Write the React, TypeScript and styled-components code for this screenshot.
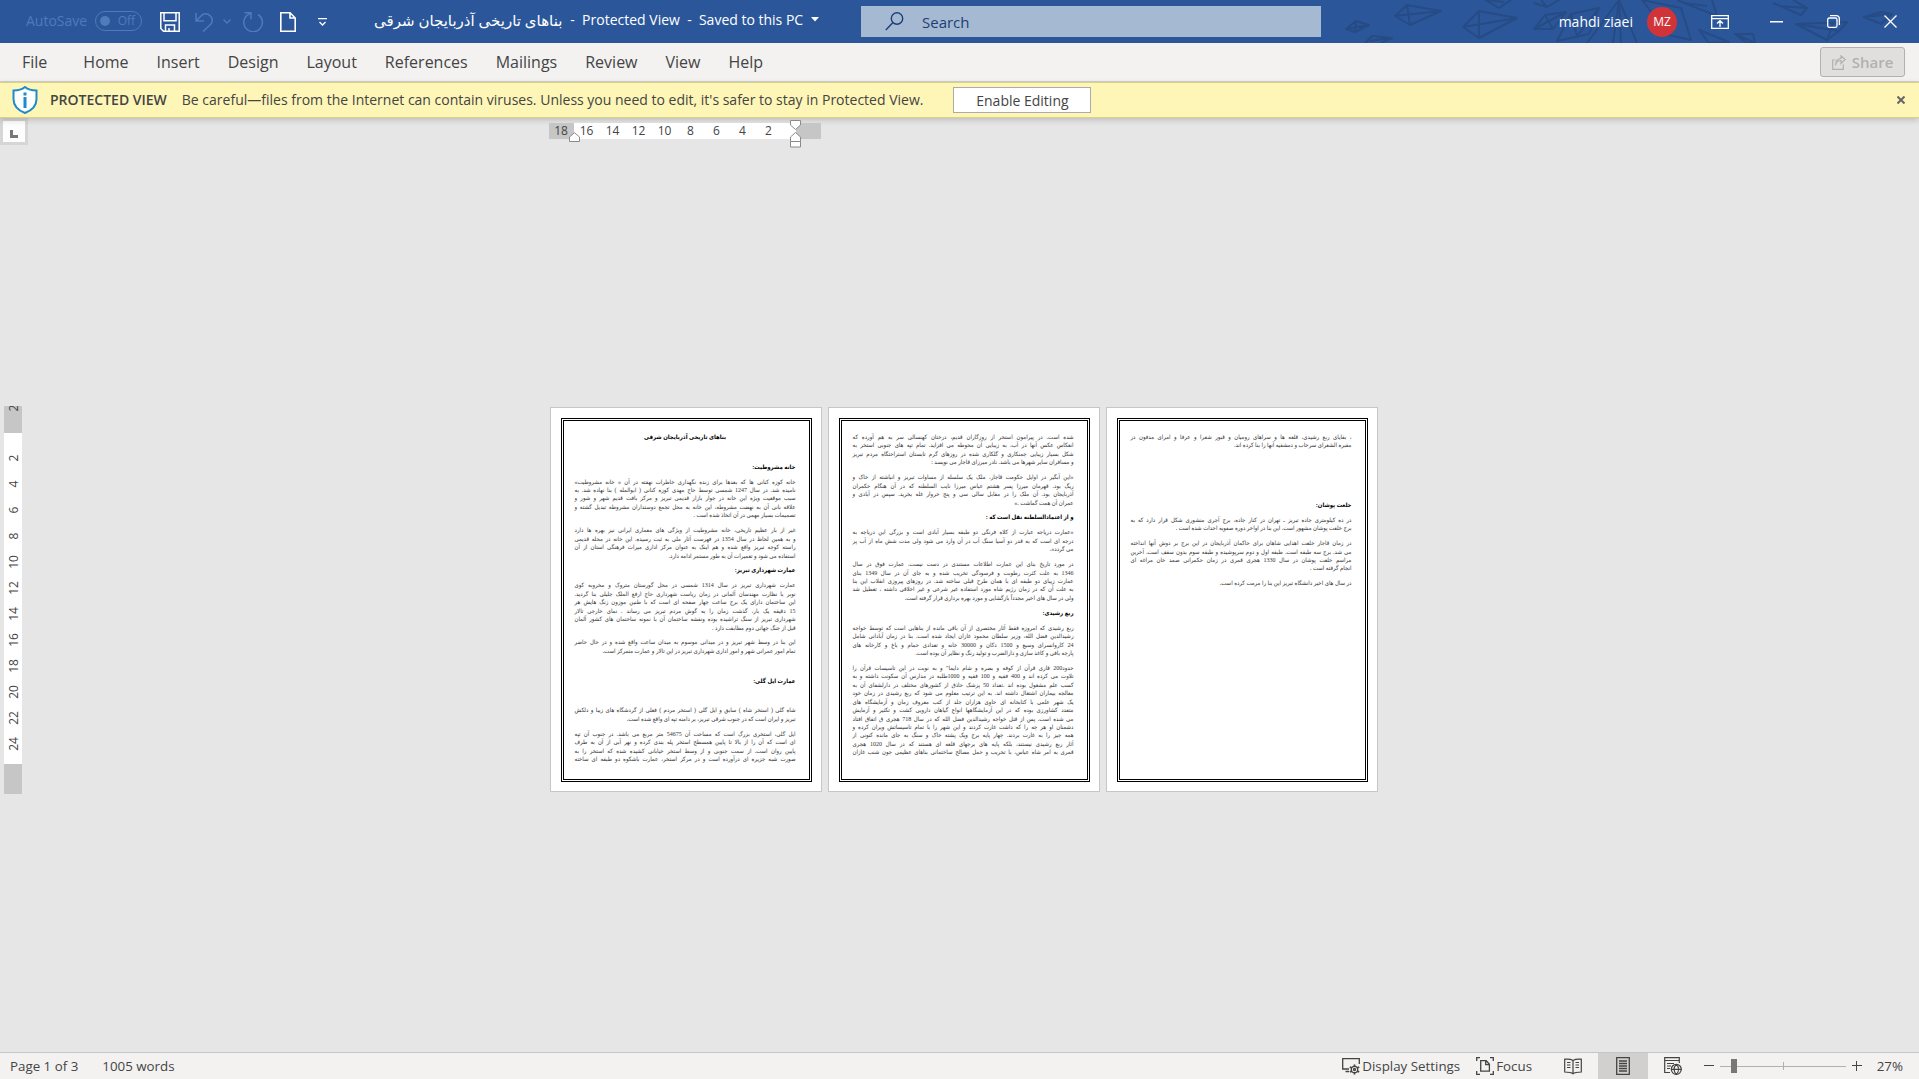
import React, { useState } from 'react';
import styled, { createGlobalStyle, css } from 'styled-components';

const UI_FONT = `'Open Sans', 'Noto Sans', 'DejaVu Sans', sans-serif`;
const DOC_FONT = `'Liberation Serif', 'DejaVu Sans Condensed', 'DejaVu Sans', serif`;

const GlobalStyle = createGlobalStyle`
  *, *::before, *::after { box-sizing: border-box; }
  html, body, #root { height: 100%; margin: 0; }
  body { font-family: ${UI_FONT}; color: #444; background: #e6e6e6; overflow: hidden; }
  button, input { font-family: inherit; color: inherit; }
  button { border: 0; background: transparent; padding: 0; }
`;

const Window = styled.div`
  display: flex;
  flex-direction: column;
  height: 100vh;
`;

/* ---------- title bar ---------- */

const TitleBar = styled.header`
  position: relative;
  display: grid;
  grid-template-columns: 861fr 460fr 598fr;
  align-items: center;
  height: 43px;
  flex: none;
  background: #2b579a;
  color: #fff;
`;

const Pattern = styled.svg`
  position: absolute;
  top: 0;
  right: 0;
  width: 600px;
  height: 43px;
  fill: none;
  stroke: #264b85;
  stroke-width: 2;
  stroke-linejoin: round;
`;

const TitleLeft = styled.div`
  display: flex;
  align-items: center;
  padding-left: 26px;
`;

const AutoSave = styled.label`
  display: flex;
  align-items: center;
  gap: 8px;
  width: 134px;
  padding-bottom: 2px;
  font-size: 14px;
  line-height: 20px;
  color: #4e7bba;
  white-space: nowrap;
`;

const Toggle = styled.span`
  display: flex;
  align-items: center;
  justify-content: space-between;
  width: 47px;
  height: 20px;
  padding: 0 6px 0 4px;
  border: 1px solid #4e7bba;
  border-radius: 10px;
  font-size: 12px;
`;

const ToggleInput = styled.input`
  appearance: none;
  width: 10px;
  height: 10px;
  margin: 0;
  border-radius: 50%;
  background: #4e7bba;
`;

const QuickButton = styled.button<{ $width: number; $dim?: boolean }>`
  display: flex;
  align-items: center;
  width: ${(p) => p.$width}px;
  height: 32px;
  color: ${(p) => (p.$dim ? '#4e7bba' : '#fff')};
`;

const DocTitle = styled.div`
  display: flex;
  align-items: center;
  gap: 8px;
  margin-left: 47px;
  padding-bottom: 4px;
  font-size: 14px;
  line-height: 20px;
  white-space: pre;
`;

const FileName = styled.span`
  font-size: 15px;
`;

const SearchBox = styled.label`
  position: relative;
  display: flex;
  align-items: center;
  gap: 18px;
  height: 31px;
  padding-left: 24px;
  background: #a6b9d2;
  color: #1c3f76;
`;

const SearchInput = styled.input`
  flex: 1;
  min-width: 0;
  border: 0;
  padding: 0;
  background: transparent;
  font-size: 15px;
  outline: none;
  &::placeholder { color: #1c3f76; opacity: 1; }
`;

const TitleRight = styled.div`
  position: relative;
  display: flex;
  align-items: center;
  justify-content: flex-end;
`;

const Account = styled.button`
  display: flex;
  align-items: center;
  gap: 14px;
  margin-right: 14px;
  font-size: 14px;
`;

const Avatar = styled.span`
  display: grid;
  place-items: center;
  width: 30px;
  height: 30px;
  border-radius: 50%;
  background: #d13438;
  font-size: 12px;
`;

const CaptionButton = styled.button`
  display: grid;
  place-items: center;
  width: 57px;
  height: 43px;
`;

/* ---------- ribbon ---------- */

const Ribbon = styled.nav`
  display: flex;
  align-items: center;
  flex: none;
  height: 39px;
  padding: 0 14px 0 8px;
  background: #f3f2f1;
  border-bottom: 1px solid #d2d0ce;
`;

const Tab = styled.button<{ $first?: boolean }>`
  height: 38px;
  padding: 0 14px;
  margin-right: ${(p) => (p.$first ? 8 : 0)}px;
  font-size: 16px;
  line-height: 22px;
`;

const ShareButton = styled.button`
  display: flex;
  align-items: center;
  justify-content: center;
  gap: 6px;
  width: 85px;
  height: 30px;
  margin-left: auto;
  border: 1px solid #b3b0ad;
  border-radius: 3px;
  background: #e1dfdd;
  color: #b3b0ad;
  font-size: 15px;
  font-weight: 600;
`;

/* ---------- protected view bar ---------- */

const MessageBar = styled.section`
  position: relative;
  display: flex;
  align-items: center;
  flex: none;
  height: 36px;
  padding: 0 11px 0 12px;
  background: #fdf6b7;
  border-top: 1px solid #d8d384;
  border-bottom: 1px solid #d8d384;
  box-shadow: 0 2px 6px rgba(0, 0, 0, 0.18);
  font-size: 14px;
  line-height: 20px;
  white-space: nowrap;
`;

const MessageTitle = styled.strong`
  margin: 0 15px 0 12px;
  font-weight: 600;
`;

const EnableButton = styled.button`
  width: 138px;
  height: 26px;
  margin-left: 30px;
  border: 1px solid #ababab;
  background: #fff;
  font-size: 14px;
`;

const DismissButton = styled.button`
  display: grid;
  place-items: center;
  width: 14px;
  height: 20px;
  margin-left: auto;
`;

/* ---------- workspace ---------- */

const Workspace = styled.main`
  display: grid;
  grid-template-columns: 28px minmax(0, 1fr) 20px;
  grid-template-rows: 29px minmax(0, 1fr);
  justify-items: center;
  flex: 1;
  min-height: 0;
  background: #e6e6e6;
`;

const TabStop = styled.button`
  display: grid;
  place-items: center;
  align-self: start;
  width: 28px;
  height: 27px;
  padding-top: 4px;
  border: 3px solid #d6d6d6;
  background: #fdfdfd;
`;

const HRuler = styled.div`
  position: relative;
  display: flex;
  align-self: start;
  width: 830px;
  height: 16px;
  margin-top: 5px;
  font-size: 12px;
  line-height: 16px;
`;

const HMargin = styled.div`
  width: 25px;
  background: #c6c6c6;
  text-align: center;
`;

const HScale = styled.div`
  display: grid;
  grid-template-columns: repeat(8, 26px);
  width: 222px;
  background: #fff;
  text-align: center;
`;

const Marker = styled.svg<{ $left: number; $top: number }>`
  position: absolute;
  left: ${(p) => p.$left}px;
  top: ${(p) => p.$top}px;
  fill: #fff;
  stroke: #8a8a8a;
`;

const VRuler = styled.div`
  align-self: center;
  width: 18px;
  margin-right: 2px;
  font-size: 12px;
`;

const VMargin = styled.div<{ $height: number }>`
  height: ${(p) => p.$height}px;
  background: #c6c6c6;
  overflow: hidden;
`;

const VScale = styled.div`
  height: 331px;
  padding-top: 12px;
  background: #fff;
`;

const VNumber = styled.div`
  display: flex;
  align-items: center;
  justify-content: center;
  height: 26px;
  padding-left: 2px;
  line-height: 18px;
  span { transform: rotate(-90deg); }
`;

const VTop = styled(VNumber)`
  height: 4px;
`;

const Pages = styled.div`
  grid-column: 2;
  display: flex;
  align-self: center;
  gap: 6px;
`;

const Page = styled.article`
  width: 272px;
  height: 385px;
  padding: 10px;
  border: 1px solid #c6c6c6;
  background: #fff;
`;

const PageFrame = styled.div`
  display: flex;
  flex-direction: column;
  gap: 1.07em;
  width: 251px;
  height: 364px;
  padding: 12px 13px 0 11px;
  border: 3px double #000;
  direction: rtl;
  font-family: ${DOC_FONT};
  font-size: 6px;
  line-height: 1.41;
  color: #333;
`;

const Para = styled.p<{ $bold?: boolean; $center?: boolean }>`
  margin: 0;
  min-height: 1.41em;
  ${(p) => p.$bold && css`font-weight: 700; color: #000;`}
  ${(p) => p.$center && css`text-align: center;`}
`;

const Line = styled.span<{ $justify: boolean }>`
  display: block;
  white-space: nowrap;
  ${(p) => p.$justify && css`text-align: justify; text-align-last: justify;`}
`;

/* ---------- status bar ---------- */

const StatusBar = styled.footer`
  display: flex;
  align-items: center;
  flex: none;
  height: 27px;
  padding: 0 16px 0 10px;
  border-top: 1px solid #c8c6c4;
  background: #f3f2f1;
  font-size: 12px;
  line-height: 18px;
  white-space: nowrap;
`;

const StatusText = styled.button`
  margin-right: 24px;
`;

const StatusTools = styled.div`
  display: flex;
  align-items: center;
  margin-left: auto;
`;

const ToolButton = styled.button`
  display: flex;
  align-items: center;
  gap: 2px;
  margin-right: 16px;
`;

const ViewButton = styled.button<{ $active?: boolean }>`
  display: grid;
  place-items: center;
  width: 50px;
  height: 26px;
  background: ${(p) => (p.$active ? '#d2d0ce' : 'transparent')};
`;

const ZoomGroup = styled.div`
  display: flex;
  align-items: center;
  gap: 6px;
  margin-left: 6px;
`;

const ZoomButton = styled.button`
  display: grid;
  place-items: center;
  width: 10px;
  height: 20px;
`;

const ZoomRange = styled.input`
  appearance: none;
  width: 126px;
  height: 14px;
  margin: 0;
  background:
    linear-gradient(#b3b0ad, #b3b0ad) center / 1px 8px no-repeat,
    linear-gradient(#b3b0ad, #b3b0ad) center / 100% 1px no-repeat;
  &::-webkit-slider-thumb {
    appearance: none;
    width: 6px;
    height: 14px;
    background: #777;
  }
`;

const ZoomValue = styled.button`
  width: 35px;
  text-align: right;
`;

/* ---------- document text ---------- */

type Block = { lines: string[]; bold?: boolean; center?: boolean };

const blank: Block = { lines: [] };

const pages: Block[][] = [
  [
    { lines: ['بناهای تاریخی آذربایجان شرقی'], bold: true, center: true },
    blank,
    { lines: ['خانه مشروطیت:'], bold: true },
    {
      lines: [
        'خانه کوزه کنانی ها که بعدها برای زنده نگهداری خاطرات نهفته در آن « خانه مشروطیت»',
        'نامیده شد. در سال 1247 شمسی توسط حاج مهدی کوزه کنانی ( ابوالمله ) بنا نهاده شد. به',
        'سبب موقعیت ویژه این خانه در جوار بازار قدیمی تبریز و مرکز بافت قدیم شهر و شور و',
        'علاقه بانی آن به نهضت مشروطه، این خانه به محل تجمع دوستداران مشروطه تبدیل گشته و',
        'تصمیمات بسیار مهمی در آن اتخاذ شده است .',
      ],
    },
    {
      lines: [
        'غیر از بار عظیم تاریخی، خانه مشروطیت از ویژگی های معماری ایرانی نیز بهره ها دارد',
        'و به همین لحاظ در سال 1354 در فهرست آثار ملی به ثبت رسیده. این خانه در محله قدیمی',
        'راسته کوچه تبریز واقع شده و هم اینک به عنوان مرکز اداری میراث فرهنگی استان از آن',
        'استفاده می شود و تعمیرات آن به طور مستمر ادامه دارد.',
      ],
    },
    { lines: ['عمارت شهرداری تبریز:'], bold: true },
    {
      lines: [
        'عمارت شهرداری تبریز در سال 1314 شمسی در محل گورستان متروک و مخروبه کوی',
        'نوبر با نظارت مهندسان آلمانی در زمان ریاست شهرداری حاج ارفع الملک جلیلی بنا گردید.',
        'این ساختمان دارای یک برج ساعت چهار صفحه ای است که با طنین موزون زنگ هایش هر',
        '15 دقیقه یک بار، گذشت زمان را به گوش مردم تبریز می رساند . نمای خارجی تالار',
        'شهرداری تبریز از سنگ تراشیده بوده ونقشه ساختمان آن با نمونه ساختمان های کشور آلمان',
        'قبل از جنگ جهانی دوم مطابقت دارد .',
      ],
    },
    {
      lines: [
        'این بنا در وسط شهر تبریز و در میدانی موسوم به میدان ساعت واقع شده و در حال حاضر',
        'تمام امور عمرانی شهر و امور اداری شهرداری تبریز در این تالار و عمارت متمرکز است.',
      ],
    },
    blank,
    { lines: ['عمارت ایل گلی:'], bold: true },
    blank,
    {
      lines: [
        'شاه گلی ( استخر شاه ) سابق و ایل گلی ( استخر مردم ) فعلی از گردشگاه های زیبا و دلکش',
        'تبریز و ایران است که در جنوب شرقی تبریز، بر دامنه تپه ای واقع شده است.',
      ],
    },
    {
      lines: [
        'ایل گلی، استخری بزرگ است که مساحت آن 54675 متر مربع می باشد. در جنوب آن تپه',
        'ای است که آن را از بالا تا پایین همسطح استخر پله بندی کرده و نهر آبی از آن به طرف',
        'پایین روان است. از سمت جنوبی و از وسط استخر خیابانی کشیده شده که استخر را به',
        'صورت شبه جزیره ای درآورده است و در مرکز استخر، عمارت باشکوه دو طبقه ای ساخته ',
      ],
    },
  ],
  [
    {
      lines: [
        'شده است. در پیرامون استخر از روزگاران قدیم، درختان کهنسالی سر به هم آورده که',
        'انعکاس عکس آنها در آب، به زیبایی آن محوطه می افزاید. تمام تپه های جنوبی استخر به',
        'شکل بسیار زیبایی چمنکاری و گلکاری شده در روزهای گرم تابستان استراحتگاه مردم تبریز',
        'و مسافران سایر شهرها می باشد. نادر میرزای قاجار می نویسد :',
      ],
    },
    {
      lines: [
        '«این آبگیر در اوایل حکومت قاجار، ملک یک سلسله از مساوات تبریز و انباشته از خاک و',
        'ریگ بود. قهرمان میرزا پسر هشتم عباس میرزا نایب السلطنه که در آن هنگام حکمران',
        'آذربایجان بود. آن ملک را در مقابل سالی سی و پنج خروار غله بخرید. سپس در آبادی و',
        'عمران آن همت گماشت .»',
      ],
    },
    { lines: ['و از اعتمادالسلطنه نقل است که :'], bold: true },
    {
      lines: [
        '«عمارت دریاچه عبارت از کلاه فرنگی دو طبقه بسیار آبادی است و بزرگی این دریاچه به',
        'درجه ای است که به قدر دو آسیا سنگ آب در آن وارد می شود ولی مدت شش ماه از آب پر',
        'می گردد».',
      ],
    },
    {
      lines: [
        'در مورد تاریخ بنای این عمارت اطلاعات مستندی در دست نیست. عمارت فوق در سال',
        '1346 به علت کثرت رطوبت و فرسودگی تخریب شده و به جای آن در سال 1349 بنای',
        'عمارت زیبای دو طبقه ای با همان طرح قبلی ساخته شد. در روزهای پیروزی انقلاب این بنا',
        'به علت آن که در زمان رژیم شاه مورد استفاده غیر شرعی و غیر اخلاقی داشته ، تعطیل شد',
        'ولی در سال های اخیر مجدداً بازگشایی و مورد بهره برداری قرار گرفته است.',
      ],
    },
    { lines: ['ربع رشیدی:'], bold: true },
    {
      lines: [
        'ربع رشیدی که امروزه فقط آثار مختصری از آن باقی مانده از بناهایی است که توسط خواجه',
        'رشیدالدین فضل الله، وزیر سلطان محمود غازان ایجاد شده است. بنا در زمان آبادانی شامل',
        '24 کاروانسرای وسیع و 1500 دکان و 30000 خانه و تعدادی حمام و باغ و کارخانه های',
        'پارچه بافی و کاغذ سازی و دارالضرب و تولید رنگ و نظایر آن بوده است.',
      ],
    },
    {
      lines: [
        'حدود200 قاری قرآن از کوفه و بصره و شام دایما" و به نوبت در این تاسیسات قرآن را',
        'تلاوت می کرده اند و 400 فقیه و 100 فقیه و 1000طلبه در مدارس آن سکونت داشته و به',
        'کسب علم مشغول بوده اند .تعداد 50 پزشک حاذق از کشورهای مختلف در دارلشفای آن به',
        'معالجه بیماران اشتغال داشته اند. به این ترتیب معلوم می شود که ربع رشیدی در زمان خود',
        'یک شهر علمی با کتابخانه ای حاوی هزاران جلد از کتب معروف زمان و آزمایشگاه های',
        'متعدد کشاورزی بوده که در این آزمایشگاهها انواع گیاهان دارویی کشت و تکثیر و آزمایش',
        'می شده است. پس از قتل خواجه رشیدالدین فضل الله که در سال 718 هجری ق اتفاق افتاد',
        'دشمنان او هر چه را که داشت غارت کردند و این شهر را با تمام تاسیساتش ویران کرده و',
        'همه چیز را به غارت بردند. چهار پایه برج ویک پشته خاک و سنگ به جای مانده کنونی از',
        'آثار ربع رشیدی نیستند، بلکه پایه های برجهای قلعه ای هستند که در سال 1020 هجری',
        'قمری به امر شاه عباس، با تخریب و حمل مصالح ساختمانی بناهای عظیمی چون شنب غازان ',
      ],
    },
  ],
  [
    {
      lines: [
        '، بقایای ربع رشیدی، قلعه ها و سراهای رومیان و قبور شعرا و عرفا و امرای مدفون در',
        'مقبره الشعرای سرخاب و دمشقیه آنها را بنا کرده اند.',
      ],
    },
    blank,
    blank,
    blank,
    { lines: ['خلعت پوشان:'], bold: true },
    {
      lines: [
        'در ده کیلومتری جاده تبریز ـ تهران در کنار جاده، برج آجری منشوری شکل قرار دارد که به',
        'برج خلعت پوشان مشهور است. این بنا در اواخر دوره صفویه احداث شده است .',
      ],
    },
    {
      lines: [
        'در زمان قاجار خلعت اهدایی شاهان برای حاکمان آذربایجان در این برج بر دوش آنها انداخته',
        'می شد. برج سه طبقه است. طبقه اول و دوم سرپوشیده و طبقه سوم بدون سقف است. آخرین',
        'مراسم خلعت پوشان در سال 1330 هجری قمری در زمان حکمرانی صمد خان مراغه ای',
        'انجام گرفته است .',
      ],
    },
    { lines: ['در سال های اخیر دانشگاه تبریز این بنا را مرمت کرده است.'] },
  ],
];

const tabs = ['File', 'Home', 'Insert', 'Design', 'Layout', 'References', 'Mailings', 'Review', 'View', 'Help'];

const isJustified = (block: Block, index: number) =>
  index < block.lines.length - 1 || block.lines[index].endsWith(' ');

function DocumentPage({ blocks }: { blocks: Block[] }) {
  return (
    <Page lang="fa">
      <PageFrame>
        {blocks.map((block, b) => (
          <Para key={b} $bold={block.bold} $center={block.center}>
            {block.lines.map((line, i) => (
              <Line key={i} $justify={isJustified(block, i)}>{line.trim()}</Line>
            ))}
          </Para>
        ))}
      </PageFrame>
    </Page>
  );
}

function Kites() {
  return (
    <Pattern viewBox="0 0 600 43" preserveAspectRatio="none" aria-hidden="true">
      <path d="M27 29 L37 21 L50 25 L36 32Z M27 29 L50 25 M37 21 L36 32" />
      <path d="M76 16 L88 5 L122 11 L91 25Z M76 16 L122 11 M88 5 L91 25" />
      <path d="M144 27 L160 11 L198 18 L160 38Z M144 27 L198 18 M160 11 L160 38" />
      <path d="M46 43 L53 36 L73 38 L62 43 M50 41 L73 38" />
      <path d="M166 0 L180 8 L192 0 M166 0 L185 2" />
      <path d="M215 29 L226 15 L247 12 L234 29Z M215 29 L247 12 M226 15 L234 29" />
      <path d="M215 3 L228 7 L240 0 M222 0 L228 7" />
      <path d="M238 41 L252 14 L280 8 L270 34Z M252 14 L258 36 L280 8" />
      <path d="M268 43 L300 0 L294 43 M300 0 L318 43 M300 0 L302 43" />
      <path d="M323 0 L350 35 L372 40 L362 8Z M350 35 L340 8" />
      <path d="M358 0 L398 16 L393 0 M366 3 L388 6" />
      <path d="M380 30 L410 42 L390 43Z" />
      <path d="M416 34 L434 34 L436 43 L428 43Z M416 34 L436 43" />
      <path d="M454 3 L482 15 L488 8 L474 0 M460 6 L488 8" />
      <path d="M477 24 L520 31 L508 40Z M477 24 L528 22 L520 31 M508 40 L514 23" />
      <path d="M545 17 L562 12 L573 14 L562 24Z M545 17 L573 14" />
    </Pattern>
  );
}

export default function App() {
  const [zoom, setZoom] = useState(27);
  return (
    <>
      <GlobalStyle />
      <Window>
        <TitleBar>
          <Kites />
          <TitleLeft>
            <AutoSave>
              AutoSave
              <Toggle><ToggleInput type="checkbox" disabled />Off</Toggle>
            </AutoSave>
            <QuickButton $width={35} aria-label="Save">
              <svg width="20" height="20" viewBox="0 0 20 20" fill="none" stroke="currentColor" strokeWidth="1.5">
                <path d="M.8.8h18.4v18.4H3.5L.8 16.5Z M4 .8v8h12v-8 M5.5 19v-6h9v6 M9 19v-3" />
              </svg>
            </QuickButton>
            <QuickButton $width={28} $dim aria-label="Undo">
              <svg width="19" height="20" viewBox="0 0 19 20" fill="none" stroke="currentColor" strokeWidth="1.5">
                <path d="M1 1v8h8 M1.5 8.5L7 3a6.5 6.5 0 0 1 9 9L8 19.5" />
              </svg>
            </QuickButton>
            <QuickButton $width={20} $dim aria-label="Undo history">
              <svg width="8" height="5" viewBox="0 0 8 5" fill="none" stroke="currentColor" strokeWidth="1.3"><path d="M.5.5L4 4 7.500.5" /></svg>
            </QuickButton>
            <QuickButton $width={37} $dim aria-label="Redo">
              <svg width="21" height="20" viewBox="0 0 21 20" fill="none" stroke="currentColor" strokeWidth="1.5">
                <path d="M1.500.8h6.500v6.500 M7.500 1.500A9.300 9.300 0 1 0 15 2.500" />
              </svg>
            </QuickButton>
            <QuickButton $width={38} aria-label="New">
              <svg width="16" height="20" viewBox="0 0 16 20" fill="none" stroke="currentColor" strokeWidth="1.600">
                <path d="M.8.8H10L15.200 6v13.200H.8Z M10 .8V6h5.200" />
              </svg>
            </QuickButton>
            <QuickButton $width={9} aria-label="Customize Quick Access Toolbar">
              <svg width="9" height="8" viewBox="0 0 9 8" fill="none" stroke="currentColor" strokeWidth="1.300"><path d="M0 .7h9 M1.500 4L4.500 7 7.500 4" /></svg>
            </QuickButton>
            <DocTitle>
              <FileName dir="rtl" lang="fa">بناهای تاریخی آذربایجان شرقی</FileName>
              <span>-  Protected View  -  Saved to this PC</span>
              <svg width="8" height="5" viewBox="0 0 8 5" fill="currentColor"><path d="M0 0h8L4 4.500Z" /></svg>
            </DocTitle>
          </TitleLeft>
          <SearchBox>
            <svg width="19" height="19" viewBox="0 0 19 19" fill="none" stroke="currentColor" strokeWidth="1.400">
              <circle cx="12" cy="6.500" r="5.700" /><path d="M8 10.500L.8 18" />
            </svg>
            <SearchInput type="text" placeholder="Search" aria-label="Search" />
          </SearchBox>
          <TitleRight>
            <Account>mahdi ziaei<Avatar>MZ</Avatar></Account>
            <CaptionButton aria-label="Ribbon Display Options">
              <svg width="18" height="14" viewBox="0 0 18 14" fill="none" stroke="currentColor" strokeWidth="1.300">
                <path d="M.7.7h16.600v12.600H.7Z M.7 3.700h16.600 M9 12V6 M6 8.500L9 5.700l3 2.800" />
              </svg>
            </CaptionButton>
            <CaptionButton aria-label="Minimize">
              <svg width="13" height="2" viewBox="0 0 13 2"><path d="M0 0h13v1.500H0Z" fill="currentColor" /></svg>
            </CaptionButton>
            <CaptionButton aria-label="Restore Down">
              <svg width="13" height="13" viewBox="0 0 13 13" fill="none" stroke="currentColor" strokeWidth="1.300">
                <rect x=".7" y="3" width="9.300" height="9.300" rx="1.500" /><path d="M3 .7h6.500a2.800 2.800 0 0 1 2.800 2.800V10" />
              </svg>
            </CaptionButton>
            <CaptionButton aria-label="Close">
              <svg width="13" height="13" viewBox="0 0 13 13" stroke="currentColor" strokeWidth="1.300"><path d="M.5.5l12 12M12.500.5l-12 12" /></svg>
            </CaptionButton>
          </TitleRight>
        </TitleBar>

        <Ribbon>
          {tabs.map((tab, i) => <Tab key={tab} $first={i === 0}>{tab}</Tab>)}
          <ShareButton disabled>
            <svg width="14" height="15" viewBox="0 0 14 15" fill="none" stroke="currentColor" strokeWidth="1.200">
              <path d="M3.500 5H.7v9.300h10.600V9.500 M3.500 10.500C4 7 6 5.500 9 5.500V8.500L13.200 4.500 9 .8V3.500C5 3.700 3.500 6.500 3.500 10.500Z" />
            </svg>
            Share
          </ShareButton>
        </Ribbon>

        <MessageBar>
          <svg width="26" height="28" viewBox="0 0 26 28">
            <path d="M13 1C10 3.500 5 4.500 1.500 4.500V13c0 7 5 11.500 11.500 14 6.500-2.500 11.500-7 11.500-14V4.500C21 4.500 16 3.500 13 1Z" fill="#fff" stroke="#1e8bcd" strokeWidth="2" />
            <path d="M11.500 6.500h3v3h-3Z M11.500 11h3v11h-3Z" fill="#1e8bcd" />
          </svg>
          <MessageTitle>PROTECTED VIEW</MessageTitle>
          <span>Be careful—files from the Internet can contain viruses. Unless you need to edit, it's safer to stay in Protected View.</span>
          <EnableButton>Enable Editing</EnableButton>
          <DismissButton aria-label="Close this message">
            <svg width="8" height="8" viewBox="0 0 8 8" stroke="#666" strokeWidth="2"><path d="M.5.5l7 7M7.500.5l-7 7" /></svg>
          </DismissButton>
        </MessageBar>

        <Workspace>
          <TabStop aria-label="Tab selector">
            <svg width="8" height="8" viewBox="0 0 8 8"><path d="M0 0h3v5h5v3H0Z" fill="#777" /></svg>
          </TabStop>
          <HRuler>
            <HMargin>18</HMargin>
            <HScale>
              {[16, 14, 12, 10, 8, 6, 4, 2].map((n) => <span key={n}>{n}</span>)}
            </HScale>
            <HMargin />
            <Marker $left={20} $top={9} width="11" height="10" viewBox="0 0 11 10"><path d="M.5 9.500V5L5.500.7 10.500 5v4.500Z" /></Marker>
            <Marker $left={241} $top={-3} width="11" height="28" viewBox="0 0 11 28">
              <path d="M.5.5h10V5l-5 4.500L.5 5Z M.5 21.500V17l5-4.500 5 4.500v4.500Z M.5 21.500h10v5.500H.5Z" />
            </Marker>
          </HRuler>
          <span />
          <VRuler>
            <VMargin $height={27}><VTop><span>2</span></VTop></VMargin>
            <VScale>
              {[2, 4, 6, 8, 10, 12, 14, 16, 18, 20, 22, 24].map((n) => <VNumber key={n}><span>{n}</span></VNumber>)}
            </VScale>
            <VMargin $height={30} />
          </VRuler>
          <Pages>
            {pages.map((blocks, i) => <DocumentPage key={i} blocks={blocks} />)}
          </Pages>
        </Workspace>

        <StatusBar>
          <StatusText>Page 1 of 3</StatusText>
          <StatusText>1005 words</StatusText>
          <StatusTools>
            <ToolButton>
              <svg width="18" height="18" viewBox="0 0 18 18" fill="none" stroke="#444" strokeWidth="1.300">
                <path d="M7 12H.7V1.700h16.600V7 M3.500 14.500H7" />
                <circle cx="12.500" cy="12.500" r="3.200" /><circle cx="12.500" cy="12.500" r="1" />
                <path d="M12.500 7.500v2M12.500 15.500v2M7.800 10l2 1M15.200 14l2 1M7.800 15l2-1M15.200 11l2-1" strokeWidth="1.800" />
              </svg>
              Display Settings
            </ToolButton>
            <ToolButton>
              <svg width="18" height="18" viewBox="0 0 18 18" fill="none" stroke="#444" strokeWidth="1.300">
                <path d="M4 .7H.7V4M14 .7h3.300V4M4 17.300H.7V14M14 17.300h3.300V14 M4.700 3.700h5.500l3.200 3.500v7H4.700Z M9.700 3.700v4h3.700" />
              </svg>
              Focus
            </ToolButton>
            <ViewButton aria-label="Read Mode">
              <svg width="18" height="17" viewBox="0 0 18 17" fill="none" stroke="#444" strokeWidth="1.200">
                <path d="M9 2.500C7 1 4 1 .7 1.200V14c3.300 0 6.300 0 8.300 1.800C11 14 14 14 17.300 14V1.200C14 1 11 1 9 2.500ZM9 2.500v13.300M3 4.500h3.500M3 7h3.500M3 9.500h3.500M11.500 4.500H15M11.500 7H15M11.500 9.500H15" />
              </svg>
            </ViewButton>
            <ViewButton $active aria-label="Print Layout">
              <svg width="14" height="18" viewBox="0 0 14 18" fill="none" stroke="#444" strokeWidth="1.300">
                <path d="M.7.700h12.600v16.600H.7ZM3 4h8M3 6.500h8M3 9h8M3 11.500h8M3 14h8" />
              </svg>
            </ViewButton>
            <ViewButton aria-label="Web Layout">
              <svg width="18" height="18" viewBox="0 0 18 18" fill="none" stroke="#444" strokeWidth="1.200">
                <path d="M6 15.500H.7V.7h14.600V6M.7 3.500h14.600M3 6.500h7M3 9h4M3 11.500h3" />
                <circle cx="12.300" cy="12.300" r="5" /><path d="M7.300 12.300h10M12.300 7.300c-3 3-3 7 0 10c3-3 3-7 0-10" />
              </svg>
            </ViewButton>
            <ZoomGroup>
              <ZoomButton aria-label="Zoom Out">
                <svg width="10" height="10" viewBox="0 0 10 10" stroke="#444"><path d="M0 4.500h10" /></svg>
              </ZoomButton>
              <ZoomRange type="range" min={10} max={190} value={zoom} aria-label="Zoom" onChange={(e) => setZoom(Number(e.target.value))} />
              <ZoomButton aria-label="Zoom In">
                <svg width="10" height="10" viewBox="0 0 10 10" stroke="#444"><path d="M0 4.500h10M4.500 0v10" /></svg>
              </ZoomButton>
              <ZoomValue>{zoom}%</ZoomValue>
            </ZoomGroup>
          </StatusTools>
        </StatusBar>
      </Window>
    </>
  );
}
